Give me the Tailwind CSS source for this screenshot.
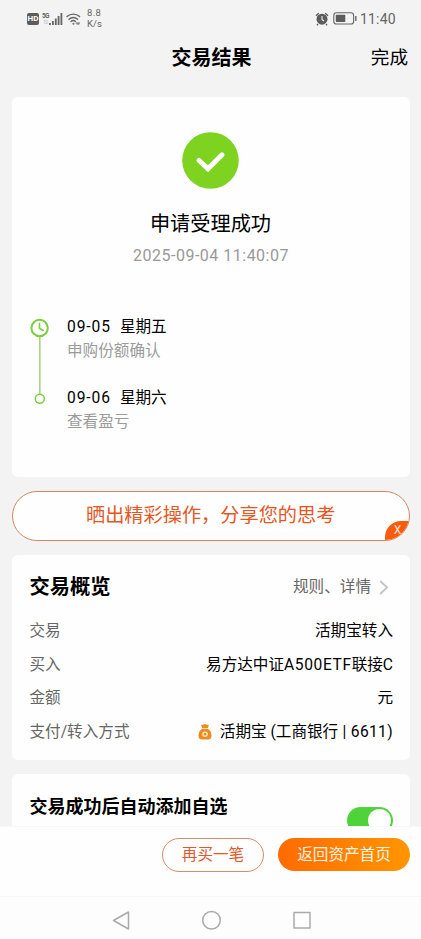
<!DOCTYPE html>
<html lang="zh-CN">
<head>
    <meta charset="UTF-8">
    <meta name="viewport" content="width=device-width, initial-scale=1.0">
    <title>交易结果</title>
    <script src="https://cdn.jsdelivr.net/npm/@tailwindcss/browser@4"></script>
</head>
<body class="bg-[#f3f3f3] h-[939px] overflow-hidden flex flex-col text-black text-[15.6px] leading-6 whitespace-nowrap font-['Roboto','Noto_Sans_CJK_SC',sans-serif]">
    <!-- Status bar -->
    <div class="h-9 shrink-0 flex items-center justify-between pl-[27px] pr-[25px] pt-px text-[#666]">
        <div class="flex items-center">
            <span class="w-3 h-3 rounded-[2px] bg-[#5c5c5c] text-white text-[8px] leading-3 font-bold text-center">HD</span>
            <svg class="ml-[3px]" width="21" height="14" viewBox="0 0 21 14" fill="#666">
                <text x="0" y="5.5" font-size="6.5" font-weight="700" textLength="7.5">5G</text>
                <text x="1" y="12" font-size="5" fill="#bbb" textLength="5">1S</text>
                <rect x="7" y="11" width="1.8" height="2" />
                <rect x="10" y="9" width="1.8" height="4" />
                <rect x="12.9" y="6.5" width="1.8" height="6.5" />
                <rect x="15.7" y="4" width="1.8" height="9" />
                <rect x="18.5" y="1" width="1.8" height="12" />
            </svg>
            <svg class="ml-[3px]" width="15" height="14" viewBox="0 0 15 14" fill="none" stroke="#666" stroke-width="1.4" stroke-linecap="round">
                <path d="M1 4.6C4.5 1.3 10.1 1.3 13.6 4.6" />
                <path d="M3 7.2c2.4-2.3 6.2-2.3 8.6 0" />
                <path d="M5 9.6c1.3-1.2 3.3-1.2 4.5 0" />
                <circle cx="7.3" cy="11.8" r=".6" fill="#666" stroke-width=".7" />
                <path d="M10.2 11h3.4M11 12h2" stroke-width="1" />
            </svg>
            <div class="ml-[6px] text-[9.5px] leading-[10.5px]">
                <div class="tracking-[.3px]">8.8</div>
                <div class="tracking-[.1px]">K/s</div>
            </div>
        </div>
        <div class="flex items-center">
            <svg width="14" height="14" viewBox="0 0 14 14">
                <circle cx="7" cy="7.2" r="5.5" fill="#5c5c5c" />
                <path d="M1 3.8 3.8 1.3M13 3.8 10.2 1.3M3 12l-1 1.2M11 12l1 1.2" stroke="#5c5c5c" stroke-width="1.4" />
                <path d="M7 4v3.4l2 1.6" fill="none" stroke="#f3f3f3" stroke-width="1.1" />
            </svg>
            <svg class="ml-[4px]" width="25" height="13" viewBox="0 0 25 13">
                <rect x=".8" y=".8" width="19.8" height="11.2" rx="2.6" fill="none" stroke="#666" stroke-width="1.1" />
                <rect x="2.8" y="2.8" width="9.5" height="7.2" rx=".8" fill="#5c5c5c" />
                <path d="M22.8 4v5" stroke="#666" stroke-width="1.4" />
            </svg>
            <span class="text-[14px] tracking-[.25px] ml-[2px]">11:40</span>
        </div>
    </div>

    <!-- Header -->
    <div class="h-[61px] shrink-0 grid grid-cols-[1fr_auto_1fr] items-start pt-[7px] pl-[15px] pr-[13px] leading-[30px]">
        <span></span>
        <h1 class="text-[20px] font-bold">交易结果</h1>
        <span class="text-[18.6px] text-right">完成</span>
    </div>

    <!-- Result -->
    <div class="h-[380px] shrink-0 ml-[12px] mr-[11px] rounded-[6px] bg-[#fefefe] pt-[35px]">
        <div class="flex justify-center pr-[2px]">
            <svg width="57" height="57" viewBox="0 0 57 57">
                <circle cx="28.5" cy="28.5" r="28.3" fill="#7ed321" />
                <path d="M17 28.5 26 36.8 40 22.8" fill="none" stroke="#fff" stroke-width="5" stroke-linecap="round" stroke-linejoin="miter" />
            </svg>
        </div>
        <p class="mt-[20px] text-[20.2px] leading-[30px] text-center pr-px">申请受理成功</p>
        <p class="mt-[5px] text-[16px] leading-6 tracking-[.5px] text-center text-[#999]">2025-09-04 11:40:07</p>
        <div class="mt-[47px] flex pl-[18px]">
            <svg class="mt-[3px]" width="20" height="90" viewBox="0 0 20 90" fill="none" stroke="#7ace3f">
                <path d="M9.8 19v57" stroke="#a5d67f" stroke-width="1.6" />
                <circle cx="9.6" cy="10" r="8.2" stroke-width="2" />
                <path d="M9.5 5.5V10.5l3.8 2" stroke-width="1.6" stroke-linecap="round" />
                <circle cx="9.8" cy="80.7" r="4.5" stroke-width="1.5" />
            </svg>
            <div class="ml-[17px]">
                <p><span class="tracking-[.9px] mr-[9px]">09-05</span>星期五</p>
                <p class="text-[#9b9b9b]">申购份额确认</p>
                <p class="mt-[23px]"><span class="tracking-[.9px] mr-[9px]">09-06</span>星期六</p>
                <p class="text-[#9b9b9b]">查看盈亏</p>
            </div>
        </div>
    </div>

    <!-- Share banner -->
    <div class="relative h-[50px] shrink-0 mt-[14px] ml-[12px] mr-[11px] rounded-full border border-[#dd8458] bg-[#fefefe] overflow-hidden pl-[73px] text-[19.2px] leading-[47px] text-[#e4571e]">
        晒出精彩操作，分享您的思考
        <span class="absolute -right-px -bottom-px w-[25px] h-[20px] rounded-tl-[16px] bg-[#fb5a0c] text-[#ffe6d8] text-[12px] leading-[19px] text-center">X</span>
    </div>

    <!-- Overview -->
    <div class="h-[205px] shrink-0 mt-[14px] ml-[12px] mr-[11px] rounded-[6px] bg-[#fefefe] pl-[17.5px] pr-[17px] pt-[17px]">
        <div class="flex items-center justify-between h-[30px]">
            <h2 class="text-[20.3px] font-bold">交易概览</h2>
            <div class="flex items-center text-[#666]">规则、详情
                <svg class="ml-[8px] mr-[4px]" width="10" height="15" viewBox="0 0 10 15" fill="none" stroke="#c4c4c4" stroke-width="1.8"><path d="M1.2 1 8 7.5 1.2 14" /></svg>
            </div>
        </div>
        <div class="mt-[17px] flex flex-col gap-[9.5px]">
            <div class="flex justify-between"><span class="text-[#666]">交易</span><span>活期宝转入</span></div>
            <div class="flex justify-between"><span class="text-[#666]">买入</span><span>易方达中证<span class="tracking-[.6px]">A500ETF</span>联接C</span></div>
            <div class="flex justify-between"><span class="text-[#666]">金额</span><span>元</span></div>
            <div class="flex justify-between">
                <span class="text-[#666]">支付/转入方式</span>
                <span class="flex items-center">
                    <svg class="mr-[8px]" width="14" height="16" viewBox="0 0 14 16" fill="#ee8c1c">
                        <path d="M4.2 4.8C2 6.3.5 8.7.5 11.5c0 3 1.6 4 3.5 4h6c1.900 0 3.500-1 3.500-4 0-2.800-1.500-5.200-3.700-6.700z" />
                        <path d="M3 .7C4.500 1.300 5.700.2 7 .2s2.500 1.100 4 .5L9.800 4H4.200z" />
                        <circle cx="7" cy="10.300" r="2.100" fill="none" stroke="#fff1dc" stroke-width="1.300" />
                    </svg>
                    <span>活期宝 (工商银行<span class="tracking-[.35px]"> | 6611)</span></span>
                </span>
            </div>
        </div>
    </div>

    <!-- Auto watchlist -->
    <div class="h-[52px] shrink-0 mt-[14px] ml-[12px] mr-[11px] rounded-t-[6px] bg-[#fefefe] overflow-hidden flex items-start justify-between pl-[17.5px] pr-[17px]">
        <h2 class="mt-[21px] text-[18px] font-bold">交易成功后自动添加自选</h2>
        <span class="mt-[33px] w-[46px] h-[27px] shrink-0 rounded-full bg-[#4fd33b] flex justify-end p-[2px]">
            <span class="w-[23px] h-[23px] rounded-full bg-white"></span>
        </span>
    </div>

    <!-- Actions -->
    <div class="h-[70px] shrink-0 bg-[#fefefe] border-t border-[#f8f8f8] flex items-start justify-end gap-[14px] pt-[11px] pr-[11px]">
        <button class="w-[102px] h-[34px] rounded-full border border-[#d98a6a] text-[#e0592c] leading-[30px]">再买一笔</button>
        <button class="w-[132px] h-[33px] rounded-full bg-linear-to-r from-[#ff6a00] to-[#ff9500] text-[#fff3e2] leading-[32px]">返回资产首页</button>
    </div>

    <!-- System navigation -->
    <div class="h-[43px] shrink-0 bg-[#fdfdfd] border-t border-[#f8f8f8]">
        <svg class="mx-auto" width="200" height="42" viewBox="0 0 200 42" fill="none" stroke="#aaa" stroke-width="1.500" stroke-linejoin="round">
            <path d="M17.500 15v17L2.500 23.500z" />
            <circle cx="100.500" cy="23.300" r="8.800" />
            <rect x="183" y="15.500" width="16" height="15.500" />
        </svg>
    </div>
</body>
</html>
